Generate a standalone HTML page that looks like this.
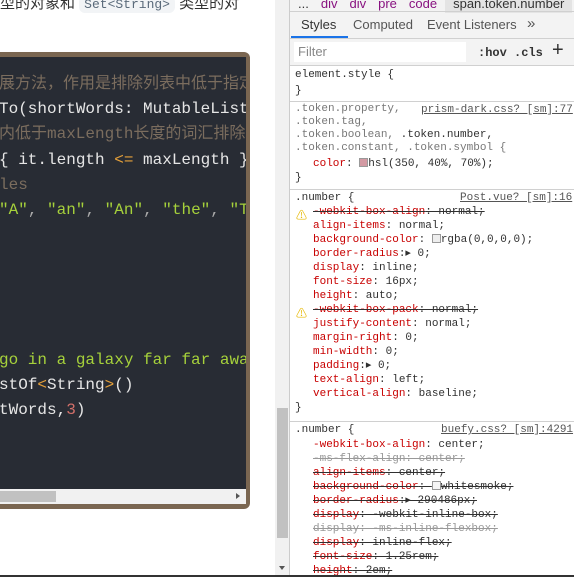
<!DOCTYPE html>
<html><head><meta charset="utf-8"><style>
*{margin:0;padding:0;box-sizing:border-box}
body{width:574px;height:577px;overflow:hidden;background:#fff;position:relative;font-family:"Liberation Sans","Noto Sans CJK SC",sans-serif}
.abs{position:absolute}
.mono{font-family:"Liberation Mono","Noto Sans CJK SC",monospace}
#code{left:-4px;top:52px;width:254px;height:457px;background:#7a6651;border-radius:0 6px 6px 0}
#inner{position:absolute;left:0;top:5px;width:250px;height:447px;background:#282c34;overflow:hidden}
.cl{position:absolute;left:3px;white-space:pre;font-size:16px;color:#e6e6e6;line-height:20px;font-family:"Liberation Mono","Noto Sans CJK SC",monospace}
.cm{color:#7b6d5e}.st{color:#a6d13b}.op{color:#e5a03a}.nm{color:#d4706a}
.dt{font-size:11px;line-height:14px;white-space:pre;color:#303030}
.p{color:#c80000}.s{text-decoration:line-through}.g{color:#999}
.line{position:absolute;left:290px;width:284px;height:1px;background:#d0d0d0}
</style></head><body>
<div class="abs" style="left:0;top:0;font-size:15px;color:#333;white-space:nowrap;line-height:14px;top:-3px">型的对象和 <span class="mono" style="background:#f2f4f6;color:#5a6a7a;font-size:13px;padding:1px 5px;border-radius:6px">Set&lt;String&gt;</span> 类型的对</div>
<div id="code" class="abs"><div id="inner">
<div class="cl cm" style="top:17px">展方法，作用是排除列表中低于指定</div>
<div class="cl" style="top:42px">To(shortWords: MutableList</div>
<div class="cl cm" style="top:67px">内低于maxLength长度的词汇排除</div>
<div class="cl" style="top:93px">{ it.length <span class="op">&lt;=</span> maxLength }</div>
<div class="cl cm" style="top:118px">les</div>
<div class="cl st" style="top:143px">"A"<span style="color:#aaa">,</span> "an"<span style="color:#aaa">,</span> "An"<span style="color:#aaa">,</span> "the"<span style="color:#aaa">,</span> "T</div>
<div class="cl st" style="top:293px">go in a galaxy far far awa</div>
<div class="cl" style="top:318px">stOf<span class="op">&lt;</span>String<span class="op">&gt;</span>()</div>
<div class="cl" style="top:343px">tWords,<span class="nm">3</span>)</div>
<div style="position:absolute;left:0;bottom:0;width:250px;height:15px;background:#f1f1f1"><div style="position:absolute;left:0;top:2px;width:60px;height:11px;background:#c1c1c1"></div><div style="position:absolute;right:6px;top:4px;border-left:4px solid #555;border-top:3.5px solid transparent;border-bottom:3.5px solid transparent"></div></div>
</div></div>
<div class="abs" style="left:275px;top:0;width:15px;height:577px;background:#f1f1f1"><div class="abs" style="left:2px;top:408px;width:11px;height:130px;background:#c1c1c1"></div><div class="abs" style="left:4px;top:566px;border-top:4px solid #555;border-left:3.5px solid transparent;border-right:3.5px solid transparent"></div></div>
<div class="abs" style="left:289px;top:0;width:1px;height:577px;background:#ccc"></div>
<div class="abs" style="left:290px;top:0;width:284px;height:65px;background:#f3f3f3"></div>
<div class="abs" style="left:290px;top:-4px;width:284px;height:16px;font-size:13px;color:#881280;white-space:nowrap"><span style="color:#333;margin-left:8px">...</span><span style="margin-left:12px">div</span><span style="margin-left:12px">div</span><span style="margin-left:12px">pre</span><span style="margin-left:12px">code</span><span style="margin-left:8px;background:#e4e4e4;color:#333;padding:0 8px 2px">span.token.number</span></div>
<div class="line" style="top:11px"></div>
<div class="abs" style="left:301px;top:17px;font-size:13px;color:#333">Styles</div>
<div class="abs" style="left:353px;top:17px;font-size:13px;color:#555">Computed</div>
<div class="abs" style="left:427px;top:17px;font-size:13px;color:#555">Event Listeners</div>
<div class="abs" style="left:527px;top:15px;font-size:15px;color:#555">»</div>
<div class="abs" style="left:291px;top:36px;width:57px;height:2px;background:#1a73e8"></div>
<div class="line" style="top:38px"></div>
<div class="abs" style="left:294px;top:42px;width:172px;height:20px;background:#fff"></div>
<div class="abs" style="left:298px;top:44px;font-size:13px;color:#888">Filter</div>
<div class="abs mono" style="left:478px;top:46px;font-size:12px;font-weight:bold;color:#333">:hov</div>
<div class="abs mono" style="left:514px;top:46px;font-size:12px;font-weight:bold;color:#333">.cls</div>
<div class="abs" style="left:552px;top:39px;font-size:20px;color:#333">+</div>
<div class="line" style="top:65px"></div>
<div class="abs mono dt" style="left:295px;top:67px;line-height:16px">element.style {
}</div>
<div class="line" style="top:101px"></div>
<div class="abs mono dt" style="left:295px;top:103px;line-height:13px"><span style="color:#777">.token.property,</span>
<span style="color:#777">.token.tag,
.token.boolean, </span>.token.number,
<span style="color:#777">.token.constant, .token.symbol {</span></div>
<div class="abs mono dt" style="left:421px;top:103px;text-decoration:underline;color:#555">prism-dark.css? [sm]:77</div>
<div class="abs mono dt" style="left:313px;top:157px"><span class="p">color</span>: <span style="display:inline-block;width:9px;height:9px;background:#d39aa3;border:1px solid #999;vertical-align:-1px"></span>hsl(350, 40%, 70%);</div>
<div class="abs mono dt" style="left:295px;top:171px">}</div>
<div class="line" style="top:189px"></div>
<div class="abs mono dt" style="left:295px;top:191px">.number {</div>
<div class="abs mono dt" style="left:460px;top:191px;text-decoration:underline;color:#555">Post.vue? [sm]:16</div>
<div class="abs mono dt" style="left:313px;top:205px"><span class="s"><span class="p">-webkit-box-align</span>: normal;</span>
<span class="p">align-items</span>: normal;
<span class="p">background-color</span>: <span style="display:inline-block;width:9px;height:9px;background:#eee;border:1px solid #999;vertical-align:-1px"></span>rgba(0,0,0,0);
<span class="p">border-radius</span>:▸ 0;
<span class="p">display</span>: inline;
<span class="p">font-size</span>: 16px;
<span class="p">height</span>: auto;
<span class="s"><span class="p">-webkit-box-pack</span>: normal;</span>
<span class="p">justify-content</span>: normal;
<span class="p">margin-right</span>: 0;
<span class="p">min-width</span>: 0;
<span class="p">padding</span>:▸ 0;
<span class="p">text-align</span>: left;
<span class="p">vertical-align</span>: baseline;</div>
<div class="abs" style="left:296px;top:207px;color:#e6b800;font-size:11px">⚠</div>
<div class="abs" style="left:296px;top:305px;color:#e6b800;font-size:11px">⚠</div>
<div class="abs mono dt" style="left:295px;top:401px">}</div>
<div class="line" style="top:421px"></div>
<div class="abs mono dt" style="left:295px;top:423px">.number {</div>
<div class="abs mono dt" style="left:441px;top:423px;text-decoration:underline;color:#555">buefy.css? [sm]:4291</div>
<div class="abs mono dt" style="left:313px;top:438px"><span class="p">-webkit-box-align</span>: center;
<span class="s g">-ms-flex-align: center;</span>
<span class="s"><span class="p">align-items</span>: center;</span>
<span class="s"><span class="p">background-color</span>: <span style="display:inline-block;width:9px;height:9px;background:#f5f5f5;border:1px solid #999;vertical-align:-1px"></span>whitesmoke;</span>
<span class="s"><span class="p">border-radius</span>:▸ 290486px;</span>
<span class="s"><span class="p">display</span>: -webkit-inline-box;</span>
<span class="s g">display: -ms-inline-flexbox;</span>
<span class="s"><span class="p">display</span>: inline-flex;</span>
<span class="s"><span class="p">font-size</span>: 1.25rem;</span>
<span class="s"><span class="p">height</span>: 2em;</span></div>
<div class="abs" style="left:0;top:575px;width:574px;height:2px;background:#333"></div>
</body></html>
